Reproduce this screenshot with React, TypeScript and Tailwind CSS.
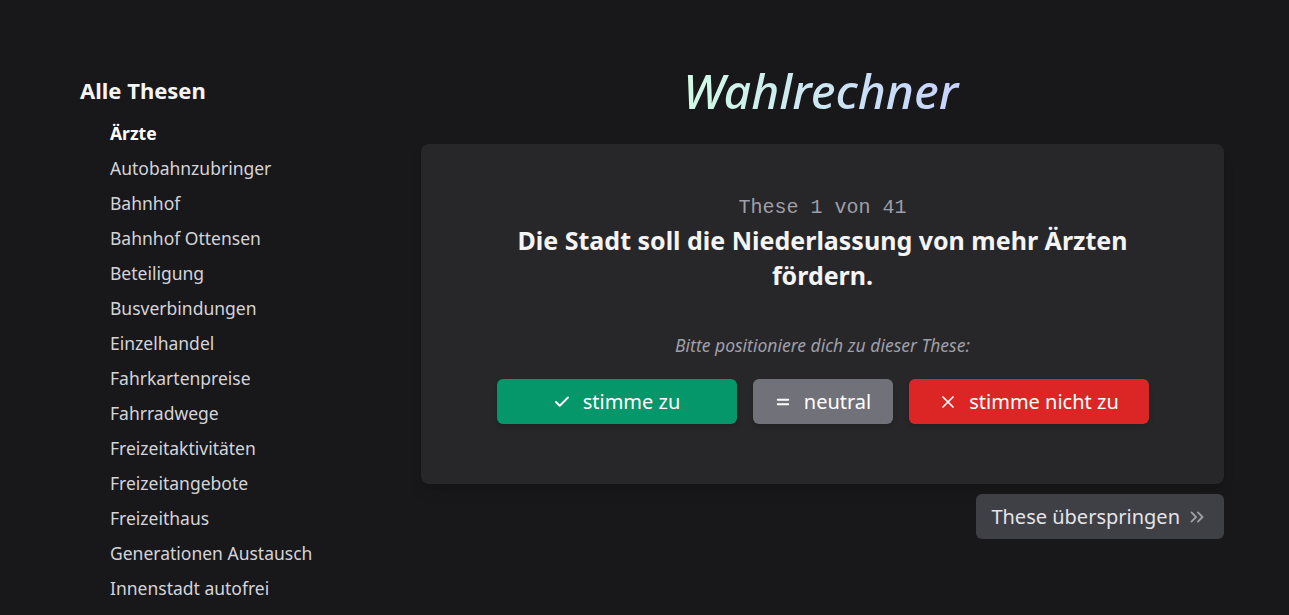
import { Check, X, Equal, ChevronsRight } from 'lucide-react'

const theses = [
  'Ärzte',
  'Autobahnzubringer',
  'Bahnhof',
  'Bahnhof Ottensen',
  'Beteiligung',
  'Busverbindungen',
  'Einzelhandel',
  'Fahrkartenpreise',
  'Fahrradwege',
  'Freizeitaktivitäten',
  'Freizeitangebote',
  'Freizeithaus',
  'Generationen Austausch',
  'Innenstadt autofrei',
]

export default function App() {
  return (
    <div className="h-[615px] overflow-hidden bg-[#18181b] font-['Noto_Sans',sans-serif] text-zinc-200">
      <div className="flex pl-20 pt-[70px]">
        <aside className="w-[341px] shrink-0">
          <h2 className="-mt-[1px] text-[22px] font-bold leading-[42px] text-zinc-100">Alle Thesen</h2>
          <ul className="mt-[5px] pl-[30px]">
            {theses.map((t, i) => (
              <li
                key={t}
                className={`text-[17.5px] leading-[35px] ${i === 0 ? 'font-bold text-white' : 'text-zinc-300'}`}
              >
                {t}
              </li>
            ))}
          </ul>
        </aside>

        <main className="w-[803px] shrink-0">
          <h1 className="-mt-[4px] text-center text-[48px] font-medium italic leading-[50px]">
            <span className="inline-block bg-gradient-to-r from-[#d1fae5] to-[#c7d2fe] bg-clip-text pr-1 text-transparent">
              Wahlrechner
            </span>
          </h1>

          <div className="mt-[28px] flex h-[340px] flex-col items-center rounded-lg bg-[#27272a] pt-[51px] shadow-lg">
            <div className="font-['Liberation_Mono',monospace] text-[20px] leading-[26px] text-zinc-400">
              These 1 von 41
            </div>
            <h3 className="mt-[2px] max-w-[660px] text-center text-[25px] font-bold leading-[35px] text-zinc-100">
              Die Stadt soll die Niederlassung von mehr Ärzten fördern.
            </h3>

            <p className="mt-[40px] text-[17.5px] italic leading-6 text-zinc-400">
              Bitte positioniere dich zu dieser These:
            </p>

            <div className="mt-[22px] flex gap-4">
              <button className="flex h-[45px] w-[240px] items-center justify-center gap-[12px] rounded-md bg-[#059669] text-[20px] text-white shadow-md">
                <Check className="h-[18px] w-[18px]" strokeWidth={2.5} />
                stimme zu
              </button>
              <button className="flex h-[45px] w-[140px] items-center justify-center gap-[12px] rounded-md bg-[#71717a] text-[20px] text-white shadow-md">
                <Equal className="h-[18px] w-[18px]" strokeWidth={2.5} />
                neutral
              </button>
              <button className="flex h-[45px] w-[240px] items-center justify-center gap-[11px] rounded-md bg-[#dc2626] text-[20px] text-white shadow-md">
                <X className="h-5 w-5" strokeWidth={2} />
                stimme nicht zu
              </button>
            </div>
          </div>

          <div className="mt-[10px] flex justify-end">
            <button className="flex h-[45px] items-center gap-[6px] rounded-md bg-[#3f3f46] pl-[15px] pr-[16px] text-[20px] text-zinc-200">
              These überspringen
              <ChevronsRight className="h-[22px] w-[22px] text-zinc-400" />
            </button>
          </div>
        </main>
      </div>
    </div>
  )
}
